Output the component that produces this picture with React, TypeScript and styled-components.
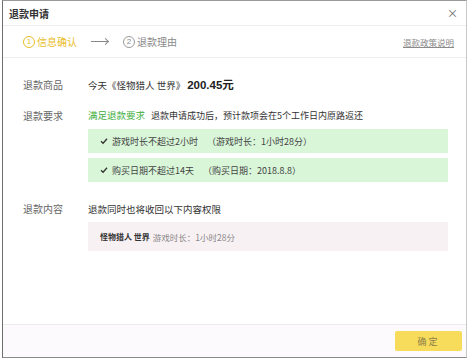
import React from "react";
import styled, { createGlobalStyle } from "styled-components";

const Global = createGlobalStyle`
  html, body { margin: 0; padding: 0; background: #ffffff; }
  body { font-family: "Noto Sans CJK SC", "Noto Sans", sans-serif; color: #333; }
`;

const Page = styled.div`
  padding-left: 2px;
  width: 471px;
  height: 361px;
  box-sizing: border-box;
`;

const Dialog = styled.div`
  width: 465px;
  height: 358px;
  box-sizing: border-box;
  border: 1px solid #c8c8c8;
  border-left: 1px solid #6f6f6f;
  border-top: 1px solid #9a9a9a;
  border-bottom: 1px solid #8a8a8a;
  display: flex;
  flex-direction: column;
  background: #fff;
`;

const TitleBar = styled.div`
  height: 24px;
  display: flex;
  align-items: center;
  justify-content: space-between;
  padding: 0 8px 0 6px;
  border-bottom: 1px solid #ededed;
`;

const Title = styled.div`
  font-size: 10px;
  font-weight: 700;
  color: #333;
`;

const Close = styled.div`
  font-size: 11px;
  color: #666;
  line-height: 1;
`;

const Steps = styled.div`
  height: 31px;
  display: flex;
  align-items: center;
  padding: 0 12px 0 20px;
  border-bottom: 1px solid #ededed;
`;

const Step = styled.div<{ $active?: boolean }>`
  display: flex;
  align-items: center;
  gap: 2px;
  font-size: 10px;
  color: ${(p) => (p.$active ? "#e9bd2a" : "#8a8a8a")};
`;

const Circle = styled.span<{ $active?: boolean }>`
  width: 10px;
  height: 10px;
  border-radius: 50%;
  border: 1px solid ${(p) => (p.$active ? "#e9bd2a" : "#9a9a9a")};
  display: inline-flex;
  align-items: center;
  justify-content: center;
  font-size: 8px;
  line-height: 1;
  font-family: "Liberation Sans", Arial, sans-serif;
`;

const Arrow = styled.span`
  width: 17px;
  margin: 0 15px 0 14px;
  height: 1px;
  background: #888;
  position: relative;
  &::after {
    content: "";
    position: absolute;
    right: 0;
    top: -2px;
    width: 4px;
    height: 4px;
    border-top: 1px solid #888;
    border-right: 1px solid #888;
    transform: rotate(45deg);
    transform-origin: center;
  }
`;

const Link = styled.a`
  margin-left: auto;
  font-size: 8.5px;
  color: #8a8a8a;
  text-decoration: underline;
`;

const Content = styled.div`
  flex: 1;
  padding: 20px 18px 0 20px;
  display: flex;
  flex-direction: column;
`;

const Row = styled.div<{ $mt?: number }>`
  display: grid;
  grid-template-columns: 65px 1fr;
  align-items: center;
  margin-top: ${(p) => p.$mt ?? 0}px;
  font-size: 9.5px;
  line-height: 14px;
`;

const Label = styled.div`
  color: #666;
  font-size: 10px;
`;

const Value = styled.div`
  color: #333;
  white-space: nowrap;
`;

const Small = styled.span`
  font-size: 9px;
`;

const Price = styled.span`
  font-family: "Liberation Sans", Arial, "Noto Sans CJK SC", sans-serif;
  font-weight: 700;
  font-size: 11.5px;
  color: #222;
  margin-left: 2px;
`;

const Green = styled.span`
  color: #3cae3c;
  margin-right: 6px;
`;

const Boxes = styled.div`
  margin-left: 65px;
  margin-top: 6px;
  display: flex;
  flex-direction: column;
  gap: 5px;
`;

const CheckBox = styled.div`
  height: 24px;
  background: #d9f6d9;
  display: flex;
  align-items: center;
  padding-left: 12px;
  gap: 4px;
  font-size: 9px;
  color: #444;
`;

const Note = styled.span`
  margin-left: 5px;
`;

const PinkBox = styled.div`
  margin-left: 65px;
  margin-top: 6px;
  height: 29px;
  background: #f8f1f4;
  display: flex;
  align-items: center;
  padding-left: 12px;
  gap: 3px;
`;

const GameName = styled.span`
  font-size: 8px;
  font-weight: 700;
  color: #333;
`;

const GameTime = styled.span`
  font-size: 8.5px;
  color: #888;
`;

const Footer = styled.div`
  height: 33px;
  border-top: 1px solid #ececec;
  background: #fcfafc;
  display: flex;
  align-items: flex-start;
  justify-content: flex-end;
  padding: 6px 4px 0 0;
  box-sizing: border-box;
`;

const Primary = styled.button`
  width: 67px;
  height: 20px;
  border: none;
  border-radius: 2px;
  background: #f6dc5a;
  color: #8c7d4a;
  font-size: 9px;
  letter-spacing: 2px;
  font-family: "Noto Sans CJK SC", sans-serif;
  padding: 0;
`;

const Check = () => (
  <svg width="8" height="8" viewBox="0 0 8 8">
    <path d="M1 4.2 L3.1 6.2 L7 1.8" fill="none" stroke="#333" strokeWidth="1.3" />
  </svg>
);

export default function App() {
  return (
    <Page>
      <Global />
      <Dialog>
        <TitleBar>
          <Title>退款申请</Title>
          <Close>×</Close>
        </TitleBar>
        <Steps>
          <Step $active>
            <Circle $active>1</Circle>信息确认
          </Step>
          <Arrow />
          <Step>
            <Circle>2</Circle>退款理由
          </Step>
          <Link>退款政策说明</Link>
        </Steps>
        <Content>
          <Row>
            <Label>退款商品</Label>
            <Value>
              今天《怪物猎人 世界》<Price>200.45元</Price>
            </Value>
          </Row>
          <Row $mt={16}>
            <Label>退款要求</Label>
            <Value>
              <Green>满足退款要求</Green>
              <Small>退款申请成功后，预计款项会在5个工作日内原路返还</Small>
            </Value>
          </Row>
          <Boxes>
            <CheckBox>
              <Check />
              游戏时长不超过2小时<Note>（游戏时长：1小时28分）</Note>
            </CheckBox>
            <CheckBox>
              <Check />
              购买日期不超过14天<Note>（购买日期：2018.8.8）</Note>
            </CheckBox>
          </Boxes>
          <Row $mt={20}>
            <Label>退款内容</Label>
            <Value>退款同时也将收回以下内容权限</Value>
          </Row>
          <PinkBox>
            <GameName>怪物猎人 世界</GameName>
            <GameTime>游戏时长：1小时28分</GameTime>
          </PinkBox>
        </Content>
        <Footer>
          <Primary>确定</Primary>
        </Footer>
      </Dialog>
    </Page>
  );
}
